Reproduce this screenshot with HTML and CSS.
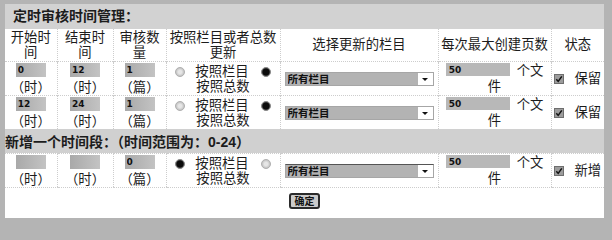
FILE: index.html
```html
<!DOCTYPE html>
<html lang="zh-CN">
<head>
<meta charset="utf-8">
<title>定时审核时间管理</title>
<link rel="stylesheet" href="styles.css">
</head>
<body>
<div class="frame">
  <div class="panel">
    <div class="title">定时审核时间管理：</div>
    <table class="grid">
      <colgroup>
        <col class="c1"><col class="c2"><col class="c3"><col class="c4"><col class="c5"><col class="c6"><col class="c7">
      </colgroup>
      <tr class="head">
        <th>开始时间</th>
        <th>结束时间</th>
        <th>审核数量</th>
        <th>按照栏目或者总数更新</th>
        <th>选择更新的栏目</th>
        <th>每次最大创建页数</th>
        <th>状态</th>
      </tr>
      <tr class="row">
        <td><input class="num" value="0"><br>（时）</td>
        <td><input class="num" value="12"><br>（时）</td>
        <td><input class="num" value="1"><br>（篇）</td>
        <td class="mode"><input type="radio" name="m1">按照栏目<input type="radio" name="m1" checked><span class="nw">按照总数</span></td>
        <td><span class="sel"><select><option>所有栏目</option></select></span></td>
        <td class="pages"><input class="wide" value="50">个文件</td>
        <td class="state"><span class="cb"><svg viewBox="0 0 10 10" width="10" height="10"><rect x="0.5" y="0.5" width="9" height="9" fill="#9c9c9c" stroke="#6e6e6e"/><path d="M2.3 5.2 L4.2 7.4 L7.8 2.4" fill="none" stroke="#111" stroke-width="1.5"/></svg></span>保留</td>
      </tr>
      <tr class="row">
        <td><input class="num" value="12"><br>（时）</td>
        <td><input class="num" value="24"><br>（时）</td>
        <td><input class="num" value="1"><br>（篇）</td>
        <td class="mode"><input type="radio" name="m2">按照栏目<input type="radio" name="m2" checked><span class="nw">按照总数</span></td>
        <td><span class="sel"><select><option>所有栏目</option></select></span></td>
        <td class="pages"><input class="wide" value="50">个文件</td>
        <td class="state"><span class="cb"><svg viewBox="0 0 10 10" width="10" height="10"><rect x="0.5" y="0.5" width="9" height="9" fill="#9c9c9c" stroke="#6e6e6e"/><path d="M2.3 5.2 L4.2 7.4 L7.8 2.4" fill="none" stroke="#111" stroke-width="1.5"/></svg></span>保留</td>
      </tr>
      <tr class="section">
        <td colspan="7">新增一个时间段：（时间范围为：0-24）</td>
      </tr>
      <tr class="row last">
        <td><input class="num" value=""><br>（时）</td>
        <td><input class="num" value=""><br>（时）</td>
        <td><input class="num" value="0"><br>（篇）</td>
        <td class="mode"><input type="radio" name="m3" checked>按照栏目<input type="radio" name="m3"><span class="nw">按照总数</span></td>
        <td><span class="sel new"><select><option>所有栏目</option></select></span></td>
        <td class="pages"><input class="wide" value="50">个文件</td>
        <td class="state"><span class="cb"><svg viewBox="0 0 10 10" width="10" height="10"><rect x="0.5" y="0.5" width="9" height="9" fill="#9c9c9c" stroke="#6e6e6e"/><path d="M2.3 5.2 L4.2 7.4 L7.8 2.4" fill="none" stroke="#111" stroke-width="1.5"/></svg></span>新增</td>
      </tr>
      <tr class="actions">
        <td colspan="7"><button class="ok" type="button">确定</button></td>
      </tr>
    </table>
  </div>
</div>
</body>
</html>
```
FILE: styles.css
```css
* { box-sizing: border-box; }

html, body { margin: 0; padding: 0; }

html {
  overflow: hidden;
}

body {
  width: 612px;
  height: 227px;
  overflow: hidden;
  background: #b4b4b4;
  font-family: "Liberation Sans", "Noto Sans CJK SC", sans-serif;
  color: #1c1c1c;
}

.frame {
  padding: 4px 8px 9px 5px;
}

.panel {
  width: 599px;
  height: 214px;
  background: #fff;
  overflow: hidden;
}

.title {
  height: 25px;
  line-height: 25px;
  padding-left: 8px;
  font-size: 14px;
  font-weight: bold;
  background: #d2d2d2;
}

.grid {
  width: 599px;
  border-collapse: collapse;
  table-layout: fixed;
  font-size: 13.33px;
}

.c1 { width: 52px; }
.c2 { width: 56px; }
.c3 { width: 53px; }
.c4 { width: 114px; }
.c5 { width: 158px; }
.c6 { width: 113px; }
.c7 { width: 53px; }

.grid th,
.grid td {
  padding: 0 2px;
  text-align: center;
  vertical-align: middle;
}

.grid th + th,
.row td + td {
  border-left: 1px dotted #cdcdcd;
}

.head th {
  height: 32px;
  font-weight: normal;
  line-height: 15px;
}

.row td {
  height: 34px;
  line-height: 15px;
  border-top: 1px dotted #cdcdcd;
  padding-top: 1px;
}

.row.last td {
  border-bottom: 1px dotted #cdcdcd;
}

.num {
  width: 30px;
  height: 14px;
  margin: 0 0 3px;
  padding: 0 2px;
  border: none;
  background: linear-gradient(to right, #a9a9a9, #c3c3c3);
  font: bold 9px "DejaVu Sans", sans-serif;
  color: #111;
  vertical-align: top;
}

.mode input[type="radio"] {
  appearance: none;
  -webkit-appearance: none;
  width: 10px;
  height: 10px;
  margin: 3px 10px 0 0;
  border-radius: 50%;
  border: 1px solid #b0b0b0;
  background: radial-gradient(circle, #e6e6e6 0 30%, #c4c4c4 70%);
  vertical-align: top;
}

.mode input[type="radio"] + input[type="radio"],
.mode input[type="radio"]:nth-of-type(2) {
  margin: 3px 0 0 12px;
}

.mode input[type="radio"]:checked {
  border-color: #8a8a8a;
  background: radial-gradient(circle, #0c0c0c 0 55%, #555 75%);
}

.nw { white-space: nowrap; }

.sel {
  position: relative;
  display: inline-block;
  vertical-align: middle;
}

.sel select {
  appearance: none;
  -webkit-appearance: none;
  display: block;
  width: 149px;
  height: 14px;
  margin: 0;
  padding: 0 2px;
  border: 1px solid #a6a6a6;
  border-radius: 0;
  background: linear-gradient(to right, #b3b3b3 0 132px, #fff 132px);
  font: bold 10.5px "Noto Sans CJK SC", sans-serif;
  line-height: 12px;
  color: #111;
}

.sel.new select {
  border-top-color: #555;
}

.sel::after {
  content: "";
  position: absolute;
  right: 6px;
  top: 6px;
  border-left: 3px solid transparent;
  border-right: 3px solid transparent;
  border-top: 3px solid #111;
}

.pages {
  padding: 1px 4px 0;
}

.wide {
  width: 64px;
  height: 13px;
  margin: 0 7px 3px 0;
  padding: 0 3px;
  border: none;
  background: #b8b8b8;
  font: bold 9px "DejaVu Sans", sans-serif;
  color: #111;
  vertical-align: top;
}

.state { white-space: nowrap; }

.cb {
  display: inline-block;
  margin-right: 10px;
  vertical-align: -1px;
  line-height: 0;
}

.section td {
  height: 24px;
  padding: 0;
  text-align: left;
  font-size: 14px;
  font-weight: bold;
  background: #d0d0d0;
}

.actions td {
  height: 27px;
  padding: 0;
}

.ok {
  width: 31px;
  height: 16px;
  padding: 0;
  margin: 0;
  border: 2px solid #2b2b2b;
  border-radius: 3px;
  background: #cbcbcb;
  font: bold 10px "Noto Sans CJK SC", sans-serif;
  line-height: 12px;
  color: #111;
  vertical-align: middle;
}
```
